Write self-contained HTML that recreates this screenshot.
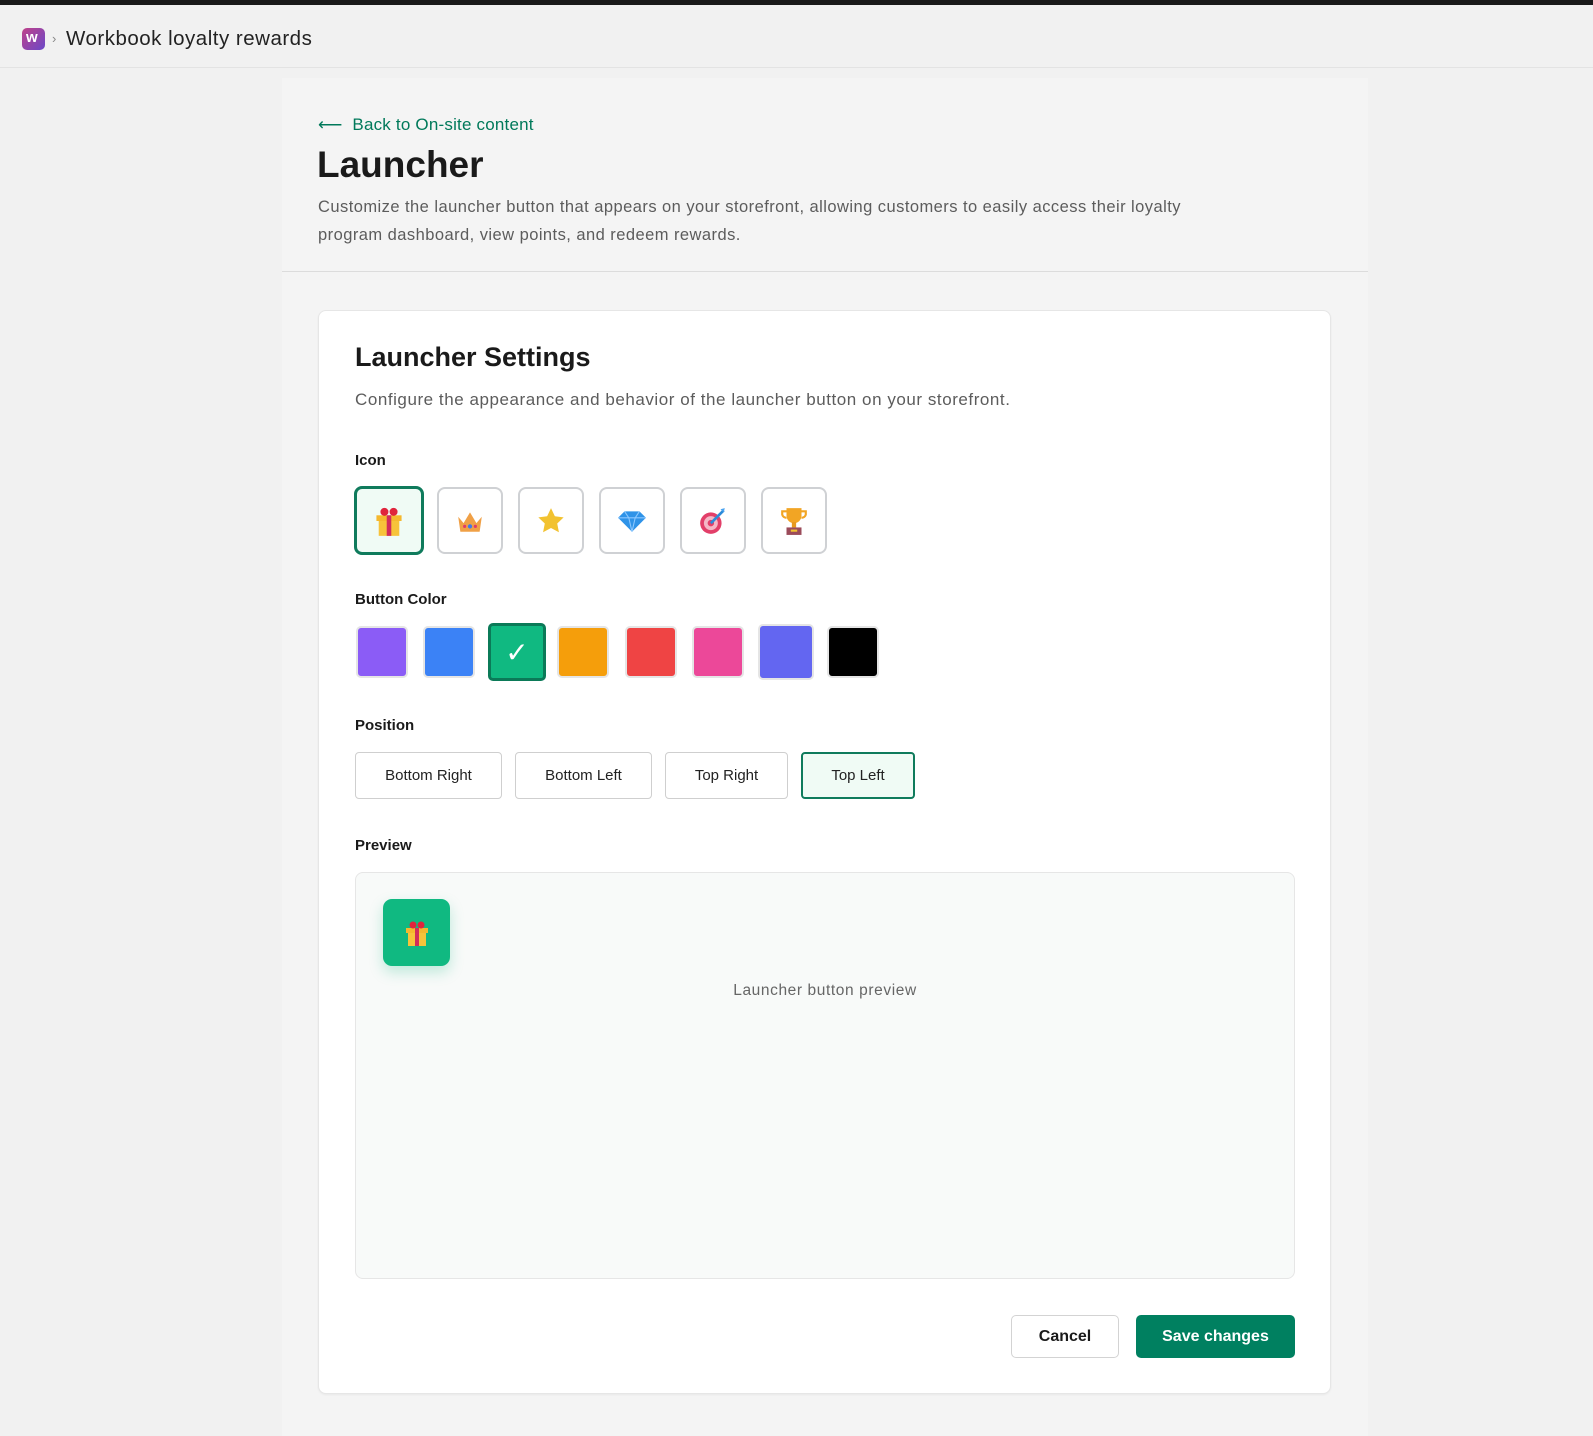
<!DOCTYPE html>
<html><head><meta charset="utf-8"><style>
*{box-sizing:border-box;margin:0;padding:0}
body{width:1593px;height:1436px;background:#f1f1f1;font-family:"Liberation Sans",Arial,sans-serif;position:relative;overflow:hidden;color:#1a1a1a}
.a{position:absolute}
.topbar{left:0;top:0;width:1593px;height:5px;background:#1a1a1a}
.hdr{left:0;top:5px;width:1593px;height:63px;border-bottom:1px solid #e3e3e3}
.main{left:282px;top:78px;width:1086px;height:1358px;background:#f4f4f4}
.card{left:318px;top:310px;width:1013px;height:1084px;background:#fff;border:1px solid #e6e6e6;border-radius:8px;box-shadow:0 1px 2px rgba(0,0,0,.05)}
.lbl{font-size:15px;font-weight:bold;color:#1a1a1a}
.ib{width:66px;height:67px;border:2px solid #cfd1d4;border-radius:8px;background:#fff;display:flex;align-items:center;justify-content:center}
.sw{width:52px;height:52px;border-radius:5px;border:2px solid #e5e5e5}
.pb{height:47px;border:1px solid #cfcfcf;border-radius:4px;background:#fff;font-size:15px;color:#222;display:flex;align-items:center;justify-content:center}
</style></head><body>
<div class="a topbar"></div>
<div class="a hdr"></div>
<div class="a" style="left:22px;top:28px;width:23px;height:22px;border-radius:5px;background:linear-gradient(135deg,#c0418a,#6a48c8)"></div>
<div class="a" style="left:26px;top:29px;color:#fff;font-weight:bold;font-size:15px">w</div>
<div class="a" style="left:52px;top:31px;color:#888;font-size:13px">›</div>
<div class="a" style="left:66px;top:27px;font-size:20.5px;letter-spacing:0.5px;color:#222">Workbook loyalty rewards</div>
<div class="a main"></div>
<div class="a" style="left:282px;top:271px;width:1086px;height:1px;background:#dcdcdc"></div>
<div class="a" style="left:318px;top:115px;font-size:17px;letter-spacing:0.2px;color:#00795a">⟵&nbsp; Back to On-site content</div>
<div class="a" style="left:317px;top:144px;font-size:37px;font-weight:bold;color:#1a1a1a">Launcher</div>
<div class="a" style="left:318px;top:193px;font-size:16.5px;letter-spacing:0.45px;color:#5c5c5c;line-height:28px;width:905px">Customize the launcher button that appears on your storefront, allowing customers to easily access their loyalty program dashboard, view points, and redeem rewards.</div>
<div class="a card"></div>
<div class="a" style="left:355px;top:342px;font-size:27px;font-weight:bold">Launcher Settings</div>
<div class="a" style="left:355px;top:390px;font-size:17px;letter-spacing:0.55px;color:#5c5c5c">Configure the appearance and behavior of the launcher button on your storefront.</div>
<div class="a lbl" style="left:355px;top:452px">Icon</div>
<div class="a ib" style="left:354px;top:486px;width:70px;height:69px;border:3px solid #0f7b5c;background:#f0fbf5"><svg width="32" height="32" viewBox="0 0 28 28"><rect x="3" y="9" width="22" height="5" fill="#f5b82e"/><rect x="5" y="14" width="18" height="13" fill="#f7c33a"/><rect x="12" y="9" width="4" height="18" fill="#d22c5a"/><circle cx="10" cy="6" r="3.5" fill="#e0243c"/><circle cx="18" cy="6" r="3.5" fill="#e0243c"/></svg></div>
<div class="a ib" style="left:437px;top:487px"><svg width="30" height="26" viewBox="0 0 28 24"><path d="M3 8l5 6 6-10 6 10 5-6-2 14H5z" fill="#f0a046"/><circle cx="9" cy="17" r="1.5" fill="#e03b6b"/><circle cx="14" cy="17" r="2" fill="#3e7be8"/><circle cx="19" cy="17" r="1.5" fill="#e03b6b"/></svg></div>
<div class="a ib" style="left:518px;top:487px"><svg width="30" height="30" viewBox="0 0 28 28"><path d="M14 2l3.6 7.6 8.2 1-6 5.7 1.6 8.2L14 20.5l-7.4 4 1.6-8.2-6-5.7 8.2-1z" fill="#f2c230"/></svg></div>
<div class="a ib" style="left:599px;top:487px"><svg width="30" height="24" viewBox="0 0 28 22"><path d="M7 2h14l6 6-13 13L1 8z" fill="#2f93e8"/><path d="M7 2l4 6h6l4-6M1 8h26M11 8l3 13 3-13" stroke="#8cc8ff" stroke-width="1" fill="none"/></svg></div>
<div class="a ib" style="left:680px;top:487px"><svg width="30" height="30" viewBox="0 0 28 28"><circle cx="12" cy="16" r="10" fill="#e23f69"/><circle cx="12" cy="16" r="6.5" fill="#f4b7c6"/><circle cx="12" cy="16" r="3" fill="#e23f69"/><path d="M12 16L24 4" stroke="#2b8ad8" stroke-width="2.5"/><path d="M21 3l4-1-1 4z" fill="#4aa3f0"/></svg></div>
<div class="a ib" style="left:761px;top:487px"><svg width="28" height="30" viewBox="0 0 26 28"><path d="M6 2h14v7a7 7 0 0 1-14 0z" fill="#f2a524"/><path d="M6 5H2v3a4 4 0 0 0 4 3M20 5h4v3a4 4 0 0 1-4 3" stroke="#f2a524" stroke-width="2" fill="none"/><rect x="11" y="15" width="4" height="5" fill="#e79a1e"/><rect x="6" y="20" width="14" height="7" fill="#9b4b5a"/><rect x="10" y="22" width="6" height="2" fill="#f2c230"/></svg></div>
<div class="a lbl" style="left:355px;top:591px">Button Color</div>
<div class="a sw" style="left:356px;top:626px;background:#8b5cf6"></div>
<div class="a sw" style="left:423px;top:626px;background:#3b82f6"></div>
<div class="a sw" style="left:488px;top:623px;width:58px;height:58px;border:3px solid #0b7a58;background:#10b981;color:#fff;font-size:28px;display:flex;align-items:center;justify-content:center">✓</div>
<div class="a sw" style="left:557px;top:626px;background:#f59e0b"></div>
<div class="a sw" style="left:625px;top:626px;background:#ef4444"></div>
<div class="a sw" style="left:692px;top:626px;background:#ec4899"></div>
<div class="a sw" style="left:758px;top:624px;width:56px;height:56px;background:#6366f1"></div>
<div class="a sw" style="left:827px;top:626px;background:#000"></div>
<div class="a lbl" style="left:355px;top:717px">Position</div>
<div class="a pb" style="left:355px;top:752px;width:147px">Bottom Right</div>
<div class="a pb" style="left:515px;top:752px;width:137px">Bottom Left</div>
<div class="a pb" style="left:665px;top:752px;width:123px">Top Right</div>
<div class="a pb" style="left:801px;top:752px;width:114px;border:2px solid #0f7b5c;background:#f0fbf5">Top Left</div>
<div class="a lbl" style="left:355px;top:837px">Preview</div>
<div class="a" style="left:355px;top:872px;width:940px;height:407px;border:1px solid #e6e6e6;border-radius:8px;background:#f8faf9"></div>
<div class="a" style="left:383px;top:899px;width:67px;height:67px;border-radius:9px;background:#10b981;box-shadow:0 6px 14px rgba(16,185,129,.25);display:flex;align-items:center;justify-content:center"><svg width="28" height="28" viewBox="0 0 28 28"><rect x="3" y="9" width="22" height="5" fill="#f5b82e"/><rect x="5" y="14" width="18" height="13" fill="#f7c33a"/><rect x="12" y="9" width="4" height="18" fill="#d22c5a"/><circle cx="10" cy="6" r="3.5" fill="#e0243c"/><circle cx="18" cy="6" r="3.5" fill="#e0243c"/></svg></div>
<div class="a" style="left:355px;top:982px;width:940px;text-align:center;font-size:15.5px;letter-spacing:0.6px;color:#666">Launcher button preview</div>
<div class="a" style="left:1011px;top:1315px;width:108px;height:43px;border:1px solid #d3d3d3;border-radius:5px;background:#fff;display:flex;align-items:center;justify-content:center;font-weight:bold;font-size:16px">Cancel</div>
<div class="a" style="left:1136px;top:1315px;width:159px;height:43px;border-radius:5px;background:#008060;color:#fff;display:flex;align-items:center;justify-content:center;font-weight:bold;font-size:16px">Save changes</div>
</body></html>
